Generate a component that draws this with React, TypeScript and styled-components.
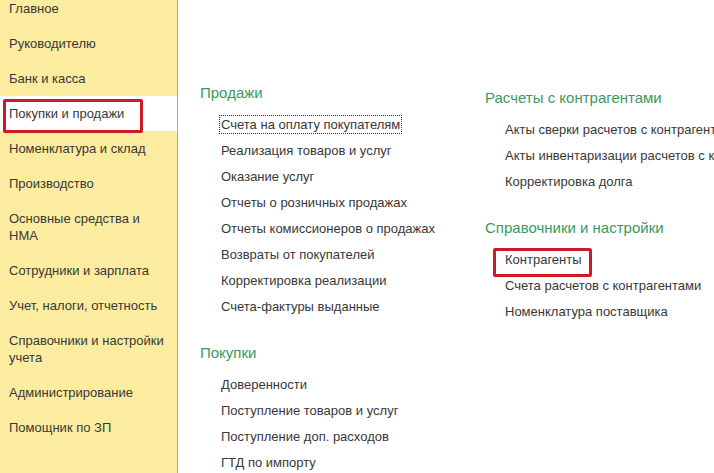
import React from 'react';
import styled, { createGlobalStyle } from 'styled-components';

const GlobalStyle = createGlobalStyle`
  html, body {
    margin: 0;
    padding: 0;
    height: 100%;
    overflow: hidden;
    background: #fff;
  }
  body {
    font-family: "Liberation Sans", Arial, sans-serif;
    color: #333;
  }
`;

const Page = styled.div`
  display: flex;
  height: 100vh;
  overflow: hidden;
`;

const Sidebar = styled.nav`
  flex: 0 0 177px;
  background-color: #fbec9f;
  border-right: 1px solid #a9a9a9;
  overflow: hidden;
`;

const SideList = styled.div`
  margin-top: -9.5px;
`;

const SideItem = styled.div<{ active?: boolean }>`
  position: relative;
  padding: 9px 8px 9px 9px;
  font-size: 13px;
  line-height: 17px;
  color: #383838;
  background-color: ${({ active }) => (active ? '#fff' : 'transparent')};
  cursor: pointer;
`;

const SideMark = styled.div`
  position: absolute;
  top: 3.5px;
  left: 3px;
  width: 140px;
  height: 34px;
  box-sizing: border-box;
  border: 3px solid #cc1a26;
  border-radius: 2px;
  pointer-events: none;
`;

const Content = styled.main`
  flex: 1;
  display: flex;
  padding-left: 22px;
  overflow: hidden;
  white-space: nowrap;
`;

const Column = styled.div<{ offset: number; width?: number }>`
  flex: 0 0 ${({ width }) => (width ? `${width}px` : 'auto')};
  padding-top: ${({ offset }) => offset}px;
  display: flex;
  flex-direction: column;
  gap: 25px;
`;

const Section = styled.section`
  display: flex;
  flex-direction: column;
  gap: 9px;
`;

const Heading = styled.h3`
  margin: 0;
  font-size: 15px;
  line-height: 18px;
  font-weight: normal;
  color: #3a9a5e;
`;

const ItemList = styled.div``;

const Item = styled.div<{ indent: number }>`
  height: 26px;
  display: flex;
  align-items: center;
  padding-left: ${({ indent }) => indent}px;
  font-size: 13px;
  color: #383838;
`;

const ItemLink = styled.span<{ focused?: boolean }>`
  position: relative;
  padding: 0 1px;
  line-height: 17px;
  border: 1px dotted ${({ focused }) => (focused ? '#333' : 'transparent')};
  cursor: pointer;
`;

const ItemMark = styled.div`
  position: absolute;
  top: -3px;
  left: -11px;
  width: 99px;
  height: 29px;
  box-sizing: border-box;
  border: 3px solid #cc1a26;
  border-radius: 2px;
  pointer-events: none;
`;

const sideItems = [
  'Главное',
  'Руководителю',
  'Банк и касса',
  'Покупки и продажи',
  'Номенклатура и склад',
  'Производство',
  'Основные средства и НМА',
  'Сотрудники и зарплата',
  'Учет, налоги, отчетность',
  'Справочники и настройки учета',
  'Администрирование',
  'Помощник по ЗП',
];

interface Group {
  title: string;
  items: string[];
}

const leftGroups: Group[] = [
  {
    title: 'Продажи',
    items: [
      'Счета на оплату покупателям',
      'Реализация товаров и услуг',
      'Оказание услуг',
      'Отчеты о розничных продажах',
      'Отчеты комиссионеров о продажах',
      'Возвраты от покупателей',
      'Корректировка реализации',
      'Счета-фактуры выданные',
    ],
  },
  {
    title: 'Покупки',
    items: [
      'Доверенности',
      'Поступление товаров и услуг',
      'Поступление доп. расходов',
      'ГТД по импорту',
    ],
  },
];

const rightGroups: Group[] = [
  {
    title: 'Расчеты с контрагентами',
    items: [
      'Акты сверки расчетов с контрагентами',
      'Акты инвентаризации расчетов с контрагентами',
      'Корректировка долга',
    ],
  },
  {
    title: 'Справочники и настройки',
    items: [
      'Контрагенты',
      'Счета расчетов с контрагентами',
      'Номенклатура поставщика',
    ],
  },
];

const SIDE_ACTIVE = 'Покупки и продажи';
const FOCUSED = 'Счета на оплату покупателям';
const MARKED = 'Контрагенты';

const GroupBlock: React.FC<{ group: Group; indent: number }> = ({ group, indent }) => (
  <Section>
    <Heading>{group.title}</Heading>
    <ItemList>
      {group.items.map((item) => (
        <Item key={item} indent={indent}>
          <ItemLink focused={item === FOCUSED}>
            {item}
            {item === MARKED && <ItemMark />}
          </ItemLink>
        </Item>
      ))}
    </ItemList>
  </Section>
);

const App: React.FC = () => (
  <>
    <GlobalStyle />
    <Page>
      <Sidebar>
        <SideList>
          {sideItems.map((item) => (
            <SideItem key={item} active={item === SIDE_ACTIVE}>
              {item}
              {item === SIDE_ACTIVE && <SideMark />}
            </SideItem>
          ))}
        </SideList>
      </Sidebar>
      <Content>
        <Column offset={84} width={285}>
          {leftGroups.map((g) => (
            <GroupBlock key={g.title} group={g} indent={19} />
          ))}
        </Column>
        <Column offset={89}>
          {rightGroups.map((g) => (
            <GroupBlock key={g.title} group={g} indent={18} />
          ))}
        </Column>
      </Content>
    </Page>
  </>
);

export default App;
